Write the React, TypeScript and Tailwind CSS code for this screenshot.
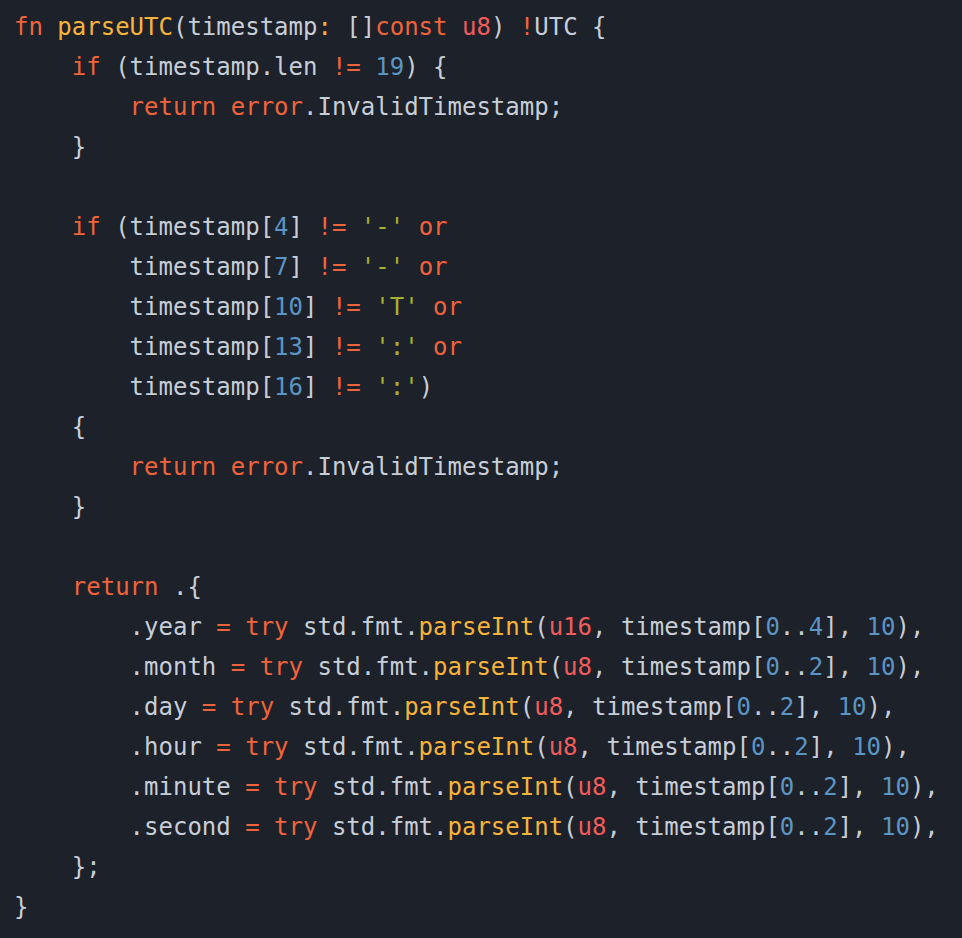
const kw = "text-[#f1643b]";
const fnc = "text-[#f7b43c]";
const num = "text-[#5b95c4]";
const ty = "text-[#f25c5c]";
const str = "text-[#a7b12d]";
const txt = "text-[#c8ced8]";

type Tok = [string, string];

const parseLine = (field: string, typ: string, range: string): Tok[] => [
    [txt, `        .${field} `],
    [kw, "="],
    [txt, " "],
    [kw, "try"],
    [txt, " std.fmt."],
    [fnc, "parseInt"],
    [txt, "("],
    [ty, typ],
    [txt, ", timestamp["],
    [num, "0"],
    [txt, ".."],
    [num, range],
    [txt, "], "],
    [num, "10"],
    [txt, "),"],
];

const checkLine = (idx: string, ch: string, tail: Tok[], lead: Tok[]): Tok[] => [
    ...lead,
    [txt, "timestamp["],
    [num, idx],
    [txt, "] "],
    [kw, "!="],
    [txt, " "],
    [str, `'${ch}'`],
    ...tail,
];

const orTail: Tok[] = [[txt, " "], [kw, "or"]];

const lines: Tok[][] = [
    [[kw, "fn"], [txt, " "], [fnc, "parseUTC"], [txt, "(timestamp"], [fnc, ":"], [txt, " []"], [kw, "const"], [txt, " "], [ty, "u8"], [txt, ") "], [kw, "!"], [txt, "UTC {"]],
    [[txt, "    "], [kw, "if"], [txt, " (timestamp.len "], [kw, "!="], [txt, " "], [num, "19"], [txt, ") {"]],
    [[txt, "        "], [kw, "return"], [txt, " "], [kw, "error"], [txt, ".InvalidTimestamp;"]],
    [[txt, "    }"]],
    [],
    checkLine("4", "-", orTail, [[txt, "    "], [kw, "if"], [txt, " ("]]),
    checkLine("7", "-", orTail, [[txt, "        "]]),
    checkLine("10", "T", orTail, [[txt, "        "]]),
    checkLine("13", ":", orTail, [[txt, "        "]]),
    checkLine("16", ":", [[txt, ")"]], [[txt, "        "]]),
    [[txt, "    {"]],
    [[txt, "        "], [kw, "return"], [txt, " "], [kw, "error"], [txt, ".InvalidTimestamp;"]],
    [[txt, "    }"]],
    [],
    [[txt, "    "], [kw, "return"], [txt, " .{"]],
    parseLine("year", "u16", "4"),
    parseLine("month", "u8", "2"),
    parseLine("day", "u8", "2"),
    parseLine("hour", "u8", "2"),
    parseLine("minute", "u8", "2"),
    parseLine("second", "u8", "2"),
    [[txt, "    };"]],
    [[txt, "}"]],
];

function App() {
    return (
        <div className="min-h-[938px] w-full bg-[#1d2129] pl-[14px] pt-[7px] font-['DejaVu_Sans_Mono',monospace] text-[24px] leading-[40px]">
            <pre className="m-0 font-['DejaVu_Sans_Mono',monospace] whitespace-pre">
                {lines.map((line, i) => (
                    <div key={i} className="h-[40px]">
                        {line.map(([cls, t], j) => (
                            <span key={j} className={cls}>{t}</span>
                        ))}
                    </div>
                ))}
            </pre>
        </div>
    );
}

export default App;
